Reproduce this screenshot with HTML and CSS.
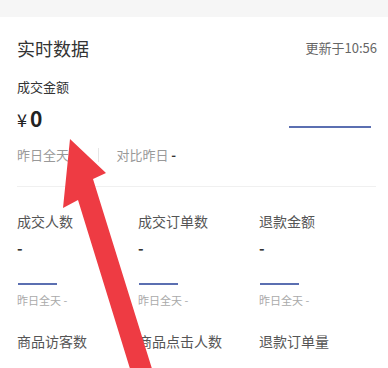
FILE: index.html
```html
<!DOCTYPE html>
<html lang="zh-CN">
<head>
<meta charset="utf-8">
<link rel="stylesheet" href="styles.css">
</head>
<body>
<div class="band"></div>
<div class="card">
  <div class="header">
    <span class="title">实时数据</span>
    <span class="updated">更新于10:56</span>
  </div>
  <div class="main-label">成交金额</div>
  <div class="main-row">
    <div class="amount"><span class="yen">¥</span><span class="num">0</span></div>
    <div class="line long"></div>
  </div>
  <div class="compare">
    <span class="cmp-item">昨日全天 -</span>
    <span class="vsep"></span>
    <span class="cmp-item">对比昨日 <b class="dash">-</b></span>
  </div>
  <div class="hr"></div>
  <div class="grid">
    <div class="cell">
      <div class="label">成交人数</div>
      <div class="value">-</div>
      <div class="line short"></div>
      <div class="yday">昨日全天 -</div>
    </div>
    <div class="cell">
      <div class="label">成交订单数</div>
      <div class="value">-</div>
      <div class="line short"></div>
      <div class="yday">昨日全天 -</div>
    </div>
    <div class="cell">
      <div class="label">退款金额</div>
      <div class="value">-</div>
      <div class="line short"></div>
      <div class="yday">昨日全天 -</div>
    </div>
    <div class="cell">
      <div class="label">商品访客数</div>
    </div>
    <div class="cell">
      <div class="label">商品点击人数</div>
    </div>
    <div class="cell">
      <div class="label">退款订单量</div>
    </div>
  </div>
</div>
<svg class="arrow" width="388" height="368" viewBox="0 0 388 368">
  <polygon points="70,139 106,173 93,179 153,372 131,372 78,200 63,208" fill="#ee3b43"/>
</svg>
</body>
</html>
```
FILE: styles.css
```css
* { box-sizing: border-box; }
html, body { margin: 0; padding: 0; }
body {
  width: 388px;
  height: 368px;
  overflow: hidden;
  background: #ffffff;
  font-family: "Noto Sans CJK SC", "Noto Sans", sans-serif;
  color: #333;
  position: relative;
}
.band { height: 17px; background: #f6f6f6; }
.card { padding: 0 11px 0 17px; }
.header {
  margin-top: 18px;
  height: 26px;
  display: flex;
  justify-content: space-between;
  align-items: center;
}
.title { font-size: 18px; line-height: 26px; color: #333; }
.updated { font-size: 13px; line-height: 18px; color: #666; }
.main-label { margin-top: 17px; font-size: 13px; line-height: 18px; color: #333; }
.main-row {
  margin-top: 8px;
  height: 28px;
  display: flex;
  justify-content: space-between;
  align-items: flex-start;
}
.amount { line-height: 28px; color: #222; display: flex; align-items: baseline; }
.yen { font-size: 18px; margin-right: 3px; }
.num { font-size: 21px; font-weight: bold; }
.line { background: #5b6fb1; height: 2px; }
.line.long { width: 82px; margin-top: 22px; margin-right: 6px; }
.compare {
  margin-top: 14px;
  height: 18px;
  display: flex;
  align-items: center;
  font-size: 13px;
  line-height: 18px;
  color: #999;
}
.vsep { width: 1px; height: 14px; background: #e6e6e6; margin: 0 17px 0 22px; }
.dash { font-weight: bold; color: #333; }
.hr { margin-top: 22px; height: 1px; background: #f0f0f0; margin-right: 1px; }
.grid {
  margin-top: 24px;
  display: grid;
  grid-template-columns: 121px 121px 121px;
  row-gap: 24px;
}
.label { font-size: 14px; line-height: 20px; color: #555; }
.value { margin-top: 7px; font-size: 15px; line-height: 20px; color: #333; font-weight: bold; }
.line.short { width: 39px; margin-top: 25px; margin-left: 1px; }
.yday { margin-top: 8px; font-size: 11px; line-height: 14px; color: #aaa; }
.arrow { position: absolute; left: 0; top: 0; }
```
